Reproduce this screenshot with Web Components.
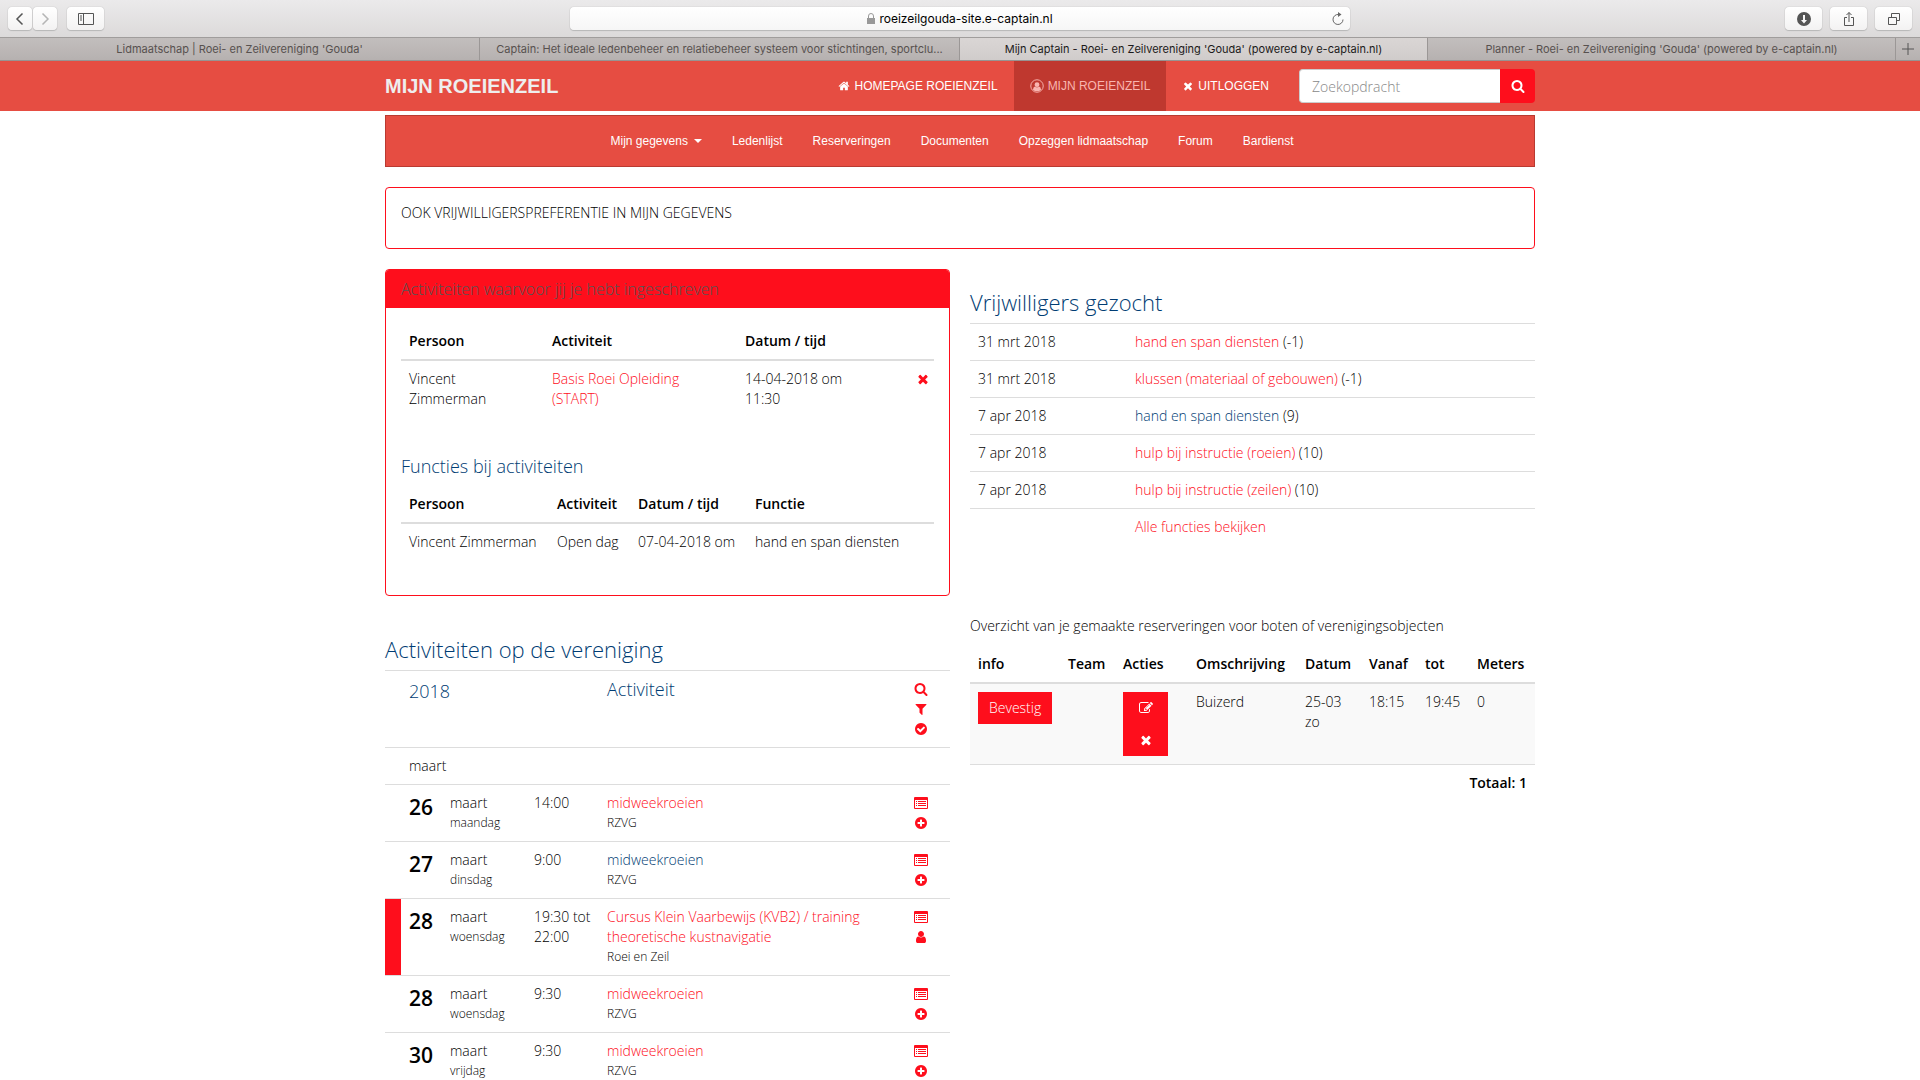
<!DOCTYPE html>
<html lang="nl">
<head>
<meta charset="utf-8">
<title>Mijn Captain - Roei- en Zeilvereniging 'Gouda'</title>
<style>
html { overflow: hidden; }
body {
  margin: 0;
  background: #fff;
  color: #000;
  font: 320 14px/20px "Open Sans", "Noto Sans", sans-serif;
  --red: #fe0e1c;
  --bar: #e64d42;
  --bar-dark: #bf382f;
  --blue: #003c73;
  --line: #ddd;
}
main {
  box-sizing: border-box;
  max-width: 1150px;
  margin: 0 auto;
}
.columns {
  display: grid;
  grid-template-columns: 1fr 1fr;
  gap: 20px;
  margin-top: 20px;
}
</style>
</head>
<body>

<browser-toolbar address="roeizeilgouda-site.e-captain.nl"></browser-toolbar>
<browser-tabs>
  <browser-tab>Lidmaatschap | Roei- en Zeilvereniging 'Gouda'</browser-tab>
  <browser-tab>Captain: Het ideale ledenbeheer en relatiebeheer systeem voor stichtingen, sportclu...</browser-tab>
  <browser-tab active>Mijn Captain - Roei- en Zeilvereniging 'Gouda' (powered by e-captain.nl)</browser-tab>
  <browser-tab>Planner - Roei- en Zeilvereniging 'Gouda' (powered by e-captain.nl)</browser-tab>
</browser-tabs>
<site-header>
  <span slot="brand">MIJN ROEIENZEIL</span>
  <header-link icon="home">HOMEPAGE ROEIENZEIL</header-link>
  <header-link icon="circle-user" active>MIJN ROEIENZEIL</header-link>
  <header-link icon="times">UITLOGGEN</header-link>
</site-header>

<main>
  <site-menu>
    <menu-link caret>Mijn gegevens</menu-link>
    <menu-link>Ledenlijst</menu-link>
    <menu-link>Reserveringen</menu-link>
    <menu-link>Documenten</menu-link>
    <menu-link>Opzeggen lidmaatschap</menu-link>
    <menu-link>Forum</menu-link>
    <menu-link>Bardienst</menu-link>
  </site-menu>
  <notice-box>OOK VRIJWILLIGERSPREFERENTIE IN MIJN GEGEVENS</notice-box>
  <div class="columns">
    <div>
      <red-panel>
        <span slot="title">Activiteiten waarvoor jij je hebt ingeschreven</span>
        <my-activities></my-activities>
        <my-functions></my-functions>
      </red-panel>
      <club-agenda></club-agenda>
    </div>
    <div>
      <volunteer-list></volunteer-list>
      <reservation-list></reservation-list>
    </div>
  </div>
</main>

<script>
// all glyphs sit on a 1792 grid unless they bring their own viewBox
const ICONS = {
  home: '<path d="M1472 992v480q0 26-19 45t-45 19h-384v-384h-256v384h-384q-26 0-45-19t-19-45v-480q0-1 .5-3t.5-3l575-474 575 474q1 2 1 6zm223-69l-62 74q-8 9-21 11h-3q-13 0-21-7l-692-577-692 577q-12 8-24 7-13-2-21-11l-62-74q-8-10-7-23.5t11-21.5l719-599q32-26 76-26t76 26l244 204v-195q0-14 9-23t23-9h192q14 0 23 9t9 23v408l219 182q10 8 11 21.5t-7 23.5z"/>',
  'circle-user': '<circle cx="896" cy="896" r="800" fill="none" stroke="currentColor" stroke-width="120"/><circle cx="896" cy="720" r="310"/><path d="M380 1370q20-360 260-420 110 120 256 120t256-120q240 60 260 420-200 200-516 200t-516-200z"/>',
  times: '<path d="M1490 1322q0 40-28 68l-136 136q-28 28-68 28t-68-28l-294-294-294 294q-28 28-68 28t-68-28l-136-136q-28-28-28-68t28-68l294-294-294-294q-28-28-28-68t28-68l136-136q28-28 68-28t68 28l294 294 294-294q28-28 68-28t68 28l136 136q28 28 28 68t-28 68l-294 294 294 294q28 28 28 68z"/>',
  search: '<path d="M1216 832q0-185-131.5-316.5t-316.5-131.5-316.5 131.5-131.5 316.5 131.5 316.5 316.5 131.5 316.5-131.5 131.5-316.5zm512 832q0 52-38 90t-90 38q-54 0-90-38l-343-342q-179 124-399 124-143 0-273.5-55.5t-225-150-150-225-55.5-273.5 55.5-273.5 150-225 225-150 273.5-55.5 273.5 55.5 225 150 150 225 55.5 273.5q0 220-124 399l343 343q37 37 37 90z"/>',
  filter: '<path d="M1595 295q17 41-14 70l-493 493v742q0 42-39 59-13 5-25 5-27 0-45-19l-256-256q-19-19-19-45v-486l-493-493q-31-29-14-70 17-39 59-39h1280q42 0 59 39z"/>',
  check: '<path d="M1412 734q0-28-18-46l-91-90q-19-19-45-19t-45 19l-408 407-226-226q-19-19-45-19t-45 19l-91 90q-18 18-18 46 0 27 18 45l362 362q19 19 45 19 27 0 46-19l543-543q18-18 18-45zm252 162q0 209-103 385.5t-279.5 279.5-385.5 103-385.5-103-279.5-279.5-103-385.5 103-385.5 279.5-279.5 385.5-103 385.5 103 279.5 279.5 103 385.5z"/>',
  plus: '<path d="M1344 960v-128q0-26-19-45t-45-19h-256v-256q0-26-19-45t-45-19h-128q-26 0-45 19t-19 45v256h-256q-26 0-45 19t-19 45v128q0 26 19 45t45 19h256v256q0 26 19 45t45 19h128q26 0 45-19t19-45v-256h256q26 0 45-19t19-45zm320-64q0 209-103 385.5t-279.5 279.5-385.5 103-385.5-103-279.5-279.5-103-385.5 103-385.5 279.5-279.5 385.5-103 385.5 103 279.5 279.5 103 385.5z"/>',
  user: '<path d="M1536 1399q0 109-62.5 187t-150.5 78h-854q-88 0-150.5-78t-62.5-187q0-85 8.5-160.5t31.5-152 58.5-131 94-89 134.5-34.5q131 128 313 128t313-128q76 0 134.5 34.5t94 89 58.5 131 31.5 152 8.5 160.5zm-256-887q0 159-112.5 271.5t-271.5 112.5-271.5-112.5-112.5-271.5 112.5-271.5 271.5-112.5 271.5 112.5 112.5 271.5z"/>',
  edit: '<path d="M888 1184l116-116-152-152-116 116v56h96v96h56zm440-720q-16-16-33 1l-350 350q-17 17-1 33t33-1l350-350q17-17 1-33zm80 594v190q0 119-84.5 203.5t-203.5 84.5h-832q-119 0-203.5-84.5t-84.5-203.5v-832q0-119 84.5-203.5t203.5-84.5h832q63 0 117 25 15 7 18 23 3 17-9 29l-49 49q-14 14-32 8-23-6-45-6h-832q-66 0-113 47t-47 113v832q0 66 47 113t113 47h832q66 0 113-47t47-113v-126q0-13 9-22l64-64q15-15 35-7t20 29zm-96-738l288 288-672 672h-288v-288zm444 132l-92 92-288-288 92-92q28-28 68-28t68 28l152 152q28 28 28 68t-28 68z"/>',
  list: ['0 0 14 14', '<path fill-rule="evenodd" d="M1 1h12a1 1 0 0 1 1 1v10a1 1 0 0 1-1 1H1a1 1 0 0 1-1-1V2a1 1 0 0 1 1-1zM1 4v8h12V4z"/><path d="M2 5h1v1H2zM4 5h8v1H4zM2 7h1v1H2zM4 7h8v1H4zM2 9h1v1H2zM4 9h8v1H4z"/>'],
  back: ['0 0 16 16', '<path d="M10.500 2.500L5 8l5.500 5.500" fill="none" stroke="currentColor" stroke-width="1.500"/>'],
  forward: ['0 0 16 16', '<path d="M5.500 2.500L11 8l-5.500 5.500" fill="none" stroke="currentColor" stroke-width="1.500"/>'],
  sidebar: ['0 0 16 16', '<path d="M.5 2.500h15v11H.5zM5.500 2.500v11M2 5h2M2 7h2M2 9h2" fill="none" stroke="currentColor"/>'],
  lock: ['0 0 8 12', '<path d="M0 5h8v6H0z"/><path d="M1.500 5V3a2.500 2.500 0 0 1 5 0v2" fill="none" stroke="currentColor"/>'],
  reload: ['0 0 14 14', '<path d="M7.500 2.500a5 5 0 1 0 4.500 5" fill="none" stroke="currentColor"/><path d="M7 0l3.500 2.500L7 5z"/>'],
  download: ['0 0 16 16', '<path fill-rule="evenodd" d="M8 1a7 7 0 1 1 0 14A7 7 0 0 1 8 1zM7 4v5H5l3 3.500L11 9H9V4z"/>'],
  share: ['0 0 16 16', '<path d="M6 6.500H3.500v8h9v-8H10M8 11V1.500M5.500 4L8 1.500 10.500 4" fill="none" stroke="currentColor"/>'],
  windows: ['0 0 16 16', '<path d="M2.500 6.500h8v7h-8zM5.500 6.500v-4h8v7h-3" fill="none" stroke="currentColor"/>'],
}

function shadow(el, html) {
  el.attachShadow({mode: 'open'}).innerHTML = html
}

const TABLE = `
:host { display: block; }
table { width: 100%; border-collapse: separate; border-spacing: 0; table-layout: fixed; }
th, td { box-sizing: border-box; padding: 8px; text-align: left; vertical-align: top; }
th { font-weight: 600; border-bottom: 2px solid var(--line); }
a { color: var(--red); text-decoration: none; }
a.blue { color: var(--blue); }
h2, h4 { margin: 0; color: var(--blue); font-weight: inherit; }
h2 { font-size: 22px; line-height: 26px; }
h4 { font-size: 18px; line-height: 20px; }`

// one <col> per width, 0 takes what is left
const cols = list => '<colgroup>' + list.map(w => `<col${w ? ` style="width:${w}px"` : ''}>`).join('') + '</colgroup>'

customElements.define('ui-icon', class extends HTMLElement {
  constructor() {
    super()
    let icon = ICONS[this.getAttribute('name')]
    let [box, body] = Array.isArray(icon) ? icon : ['0 0 1792 1792', icon]
    shadow(this, `
<style>
:host { display: inline-block; width: 14px; height: 14px; flex: none; }
svg { display: block; width: 100%; height: 100%; fill: currentColor; }
</style>
<svg viewBox="${box}" aria-hidden="true">${body}</svg>`)
  }
})

customElements.define('browser-toolbar', class extends HTMLElement {
  constructor() {
    super()
    shadow(this, `
<style>
:host {
  display: flex; align-items: center; justify-content: space-between;
  box-sizing: border-box; height: 37px; padding: 0 8px;
  background: linear-gradient(#ebeaeb, #dcdada);
  color: #555;
}
.group { display: flex; gap: 8px; flex: 1; }
.group.end { justify-content: flex-end; }
.pair { display: flex; gap: 1px; margin-right: 2px; }
button {
  display: flex; align-items: center; justify-content: center;
  width: 37px; height: 23px; padding: 0; border: 0; border-radius: 4px;
  background: linear-gradient(#fff, #f3f2f2);
  box-shadow: 0 0 1px #999, 0 1px 1px #bbb;
  color: inherit;
}
.pair button { width: 24px; }
.pair button + button { color: #b5b5b5; }
ui-icon { width: 16px; height: 16px; }
.address {
  display: grid; grid-template-columns: 1fr auto 1fr; align-items: center; flex: none;
  box-sizing: border-box; width: 41%; height: 23px; padding: 0 5px;
  border-radius: 4px; background: linear-gradient(#fff, #f6f6f6);
  box-shadow: 0 0 1px #999, 0 1px 1px #bbb;
}
.address label { display: flex; align-items: center; grid-column: 2; gap: 4px; }
.address ui-icon { width: 8px; height: 12px; color: #999; }
input {
  field-sizing: content; border: 0; padding: 0; outline: 0; background: none;
  font: 12px Inter, Roboto, sans-serif; color: #000;
}
.address button { justify-self: end; width: 14px; background: none; box-shadow: none; }
.address button ui-icon { width: 14px; height: 14px; color: #666; }
</style>
<div class="group">
  <div class="pair">
    <button aria-label="Vorige"><ui-icon name="back"></ui-icon></button>
    <button aria-label="Volgende"><ui-icon name="forward"></ui-icon></button>
  </div>
  <button aria-label="Navigatiekolom"><ui-icon name="sidebar"></ui-icon></button>
</div>
<div class="address">
  <label><ui-icon name="lock"></ui-icon><input type="text" aria-label="Adres" value="${this.getAttribute('address')}"></label>
  <button aria-label="Herladen"><ui-icon name="reload"></ui-icon></button>
</div>
<div class="group end">
  <button aria-label="Downloads"><ui-icon name="download"></ui-icon></button>
  <button aria-label="Delen"><ui-icon name="share"></ui-icon></button>
  <button aria-label="Vensters"><ui-icon name="windows"></ui-icon></button>
</div>`)
  }
})

customElements.define('browser-tabs', class extends HTMLElement {
  constructor() {
    super()
    shadow(this, `
<style>
:host {
  display: grid; grid-template-columns: 480fr 480fr 468fr 468fr 24px;
  box-sizing: border-box; height: 24px;
  border-top: 1px solid #a09d9c; border-bottom: 1px solid #979392;
  background: linear-gradient(#c2bebd, #b6b1b0);
}
button { display: flex; align-items: center; justify-content: center; border: 0; padding: 0; background: none; color: #555; }
svg { width: 12px; height: 12px; }
</style>
<slot></slot>
<button aria-label="Nieuw tabblad"><svg viewBox="0 0 12 12"><path d="M6 0v12M0 6h12" stroke="currentColor"/></svg></button>`)
  }
})

customElements.define('browser-tab', class extends HTMLElement {
  constructor() {
    super()
    shadow(this, `
<style>
:host { display: block; min-width: 0; border-right: 1px solid #9b9796; }
:host([active]) { background: linear-gradient(#dad6d5, #d0cccb); }
button {
  width: 100%; height: 100%; padding: 0 16px; border: 0; background: none;
  font: 11px Inter, Roboto, sans-serif; color: #57514f;
  overflow: hidden; white-space: nowrap; text-overflow: ellipsis;
}
:host([active]) button { color: #1c1a1a; }
</style>
<button><slot></slot></button>`)
  }
})

customElements.define('site-header', class extends HTMLElement {
  constructor() {
    super()
    shadow(this, `
<style>
:host { display: block; background: var(--bar); }
.inner {
  display: flex; align-items: center; height: 50px; max-width: 1150px; margin: 0 auto;
  font: 12px/20px "Liberation Sans", Arial, sans-serif; color: #fff;
}
.brand { margin-right: auto; color: #eee; text-decoration: none; font-size: 20px; font-weight: 700; }
nav { display: flex; align-self: stretch; margin-right: 14px; }
form { display: flex; height: 34px; }
input {
  box-sizing: border-box; width: 201px; padding: 0 12px; border: 1px solid #ccc; border-right: 0;
  border-radius: 4px 0 0 4px; background: #fff; color: #000; font: 320 14px "Open Sans", sans-serif;
}
input::placeholder { color: #888; opacity: 1; }
button {
  display: flex; align-items: center; justify-content: center; width: 35px; padding: 0;
  border: 0; border-radius: 0 4px 4px 0; background: var(--red); color: #fff;
}
</style>
<div class="inner">
  <a class="brand" href="#"><slot name="brand"></slot></a>
  <nav><slot></slot></nav>
  <form>
    <input type="text" placeholder="Zoekopdracht" aria-label="Zoekopdracht">
    <button type="button" aria-label="Zoeken"><ui-icon name="search"></ui-icon></button>
  </form>
</div>`)
  }
})

customElements.define('header-link', class extends HTMLElement {
  constructor() {
    super()
    shadow(this, `
<style>
:host { display: flex; }
a { display: flex; align-items: center; gap: 4px; padding: 0 16px; color: #fff; text-decoration: none; }
ui-icon { width: 12px; height: 12px; }
ui-icon[name=circle-user] { width: 14px; height: 14px; }
:host([active]) a { background: var(--bar-dark); color: #f9b5b0; }
</style>
<a href="#"><ui-icon name="${this.getAttribute('icon')}"></ui-icon><slot></slot></a>`)
  }
})

customElements.define('site-menu', class extends HTMLElement {
  constructor() {
    super()
    shadow(this, `
<style>
:host {
  display: block; margin-top: 4px; border: 1px solid #b93a31; background: var(--bar);
  font: 12px/20px "Liberation Sans", Arial, sans-serif;
}
nav { display: flex; justify-content: center; padding-right: 16px; }
</style>
<nav><slot></slot></nav>`)
  }
})

customElements.define('menu-link', class extends HTMLElement {
  constructor() {
    super()
    shadow(this, `
<style>
a { display: flex; align-items: center; gap: 6px; padding: 15px; color: #fff; text-decoration: none; }
i { display: none; border: 4px solid transparent; border-top-color: #fff; border-bottom: 0; }
:host([caret]) i { display: block; }
</style>
<a href="#"><slot></slot><i></i></a>`)
  }
})

customElements.define('notice-box', class extends HTMLElement {
  constructor() {
    super()
    shadow(this, `
<style>
:host { display: block; margin-top: 20px; padding: 15px 15px 25px; border: 1px solid var(--red); border-radius: 4px; }
</style>
<slot></slot>`)
  }
})

customElements.define('red-panel', class extends HTMLElement {
  constructor() {
    super()
    shadow(this, `
<style>
:host { display: block; border: 1px solid var(--red); border-radius: 4px; overflow: hidden; }
h3 { margin: 0; padding: 9px 15px; background: var(--red); color: #555; font-size: 16px; line-height: 20px; font-weight: inherit; }
.body { display: flex; flex-direction: column; gap: 39px; padding: 15px 15px 35px; }
</style>
<h3><slot name="title"></slot></h3>
<div class="body"><slot></slot></div>`)
  }
})

customElements.define('my-activities', class extends HTMLElement {
  constructor() {
    super()
    shadow(this, `
<style>${TABLE}
.del { padding: 8px 0 8px 6px; }
ui-icon { vertical-align: -2px; }
</style>
<table>
  ${cols([143, 193, 0, 24])}
  <tr><th>Persoon</th><th>Activiteit</th><th>Datum / tijd</th><th></th></tr>
  <tr>
    <td>Vincent<br>Zimmerman</td>
    <td><a href="#">Basis Roei Opleiding<br>(START)</a></td>
    <td>14-04-2018 om<br>11:30</td>
    <td class="del"><a href="#" aria-label="Afmelden"><ui-icon name="times"></ui-icon></a></td>
  </tr>
</table>`)
  }
})

customElements.define('my-functions', class extends HTMLElement {
  constructor() {
    super()
    shadow(this, `
<style>${TABLE}
h4 { margin-bottom: 10px; }
</style>
<h4>Functies bij activiteiten</h4>
<table>
  ${cols([148, 81, 117, 0])}
  <tr><th>Persoon</th><th>Activiteit</th><th>Datum / tijd</th><th>Functie</th></tr>
  <tr><td>Vincent Zimmerman</td><td>Open dag</td><td>07-04-2018 om</td><td>hand en span diensten</td></tr>
</table>`)
  }
})

customElements.define('club-agenda', class extends HTMLElement {
  constructor() {
    super()
    let items = [
      {day: 26, name: 'maandag', time: '14:00', title: 'midweekroeien', by: 'RZVG'},
      {day: 27, name: 'dinsdag', time: '9:00', title: 'midweekroeien', by: 'RZVG', seen: true},
      {day: 28, name: 'woensdag', time: '19:30 tot 22:00', title: 'Cursus Klein Vaarbewijs (KVB2) / training theoretische kustnavigatie', by: 'Roei en Zeil', mine: true},
      {day: 28, name: 'woensdag', time: '9:30', title: 'midweekroeien', by: 'RZVG'},
      {day: 30, name: 'vrijdag', time: '9:30', title: 'midweekroeien', by: 'RZVG'},
    ]
    shadow(this, `
<style>${TABLE}
:host { margin-top: 40px; }
h2 { margin-bottom: 8px; }
td { border-top: 1px solid var(--line); }
td:first-child { padding: 0; }
.mine td:first-child { background: var(--red); }
.day { font-size: 21px; font-weight: 600; line-height: 28px; padding-right: 0; }
.time { padding-right: 0; }
.act { padding-right: 0; }
.act a { display: block; height: 20px; }
.act ui-icon { display: block; padding: 3px 0; }
h4.year { line-height: 24px; }
small { display: block; font-size: 12px; }
</style>
<h2>Activiteiten op de vereniging</h2>
<table>
  ${cols([16, 41, 84, 73, 0, 44])}
  <tr>
    <td></td>
    <td colspan="3"><h4 class="year">2018</h4></td>
    <td><h4>Activiteit</h4></td>
    <td class="act">
      <a href="#" aria-label="Zoeken"><ui-icon name="search"></ui-icon></a>
      <a href="#" aria-label="Filter"><ui-icon name="filter"></ui-icon></a>
      <a href="#" aria-label="Aangemeld"><ui-icon name="check"></ui-icon></a>
    </td>
  </tr>
  <tr><td></td><td colspan="5">maart</td></tr>
  ${items.map(i => `
  <tr class="${i.mine ? 'mine' : ''}">
    <td></td>
    <td class="day">${i.day}</td>
    <td>maart<small>${i.name}</small></td>
    <td class="time">${i.time}</td>
    <td><a href="#" class="${i.seen ? 'blue' : ''}">${i.title}</a><small>${i.by}</small></td>
    <td class="act">
      <a href="#" aria-label="Details"><ui-icon name="list"></ui-icon></a>
      <a href="#" aria-label="Deelname"><ui-icon name="${i.mine ? 'user' : 'plus'}"></ui-icon></a>
    </td>
  </tr>`).join('')}
</table>`)
  }
})

customElements.define('volunteer-list', class extends HTMLElement {
  constructor() {
    super()
    let rows = [
      ['31 mrt 2018', 'hand en span diensten', -1],
      ['31 mrt 2018', 'klussen (materiaal of gebouwen)', -1],
      ['7 apr 2018', 'hand en span diensten', 9, 'blue'],
      ['7 apr 2018', 'hulp bij instructie (roeien)', 10],
      ['7 apr 2018', 'hulp bij instructie (zeilen)', 10],
    ]
    shadow(this, `
<style>${TABLE}
:host { padding-top: 20px; }
h2 { margin-bottom: 8px; }
td { border-top: 1px solid var(--line); }
</style>
<h2>Vrijwilligers gezocht</h2>
<table>
  ${cols([157, 0])}
  ${rows.map(([date, name, n, cls]) => `<tr><td>${date}</td><td><a href="#" class="${cls || ''}">${name}</a> (${n})</td></tr>`).join('')}
  <tr><td></td><td><a href="#">Alle functies bekijken</a></td></tr>
</table>`)
  }
})

customElements.define('reservation-list', class extends HTMLElement {
  constructor() {
    super()
    shadow(this, `
<style>${TABLE}
:host { margin-top: 71px; }
p { margin: 0 0 10px; }
th { padding-right: 0; }
.row td { background: #f9f9f9; border-bottom: 1px solid var(--line); }
.total { text-align: right; font-weight: 600; }
button {
  display: flex; align-items: center; justify-content: center; height: 32px; padding: 0 11px;
  border: 0; background: var(--red); color: #fff; font: inherit;
}
.icon { width: 45px; }
</style>
<p>Overzicht van je gemaakte reserveringen voor boten of verenigingsobjecten</p>
<table>
  ${cols([90, 55, 73, 0, 64, 56, 52, 66])}
  <tr><th>info</th><th>Team</th><th>Acties</th><th>Omschrijving</th><th>Datum</th><th>Vanaf</th><th>tot</th><th>Meters</th></tr>
  <tr class="row">
    <td><button>Bevestig</button></td>
    <td></td>
    <td>
      <button class="icon" aria-label="Wijzigen"><ui-icon name="edit"></ui-icon></button>
      <button class="icon" aria-label="Verwijderen"><ui-icon name="times"></ui-icon></button>
    </td>
    <td>Buizerd</td><td>25-03<br>zo</td><td>18:15</td><td>19:45</td><td>0</td>
  </tr>
  <tr><td class="total" colspan="8">Totaal: 1</td></tr>
</table>`)
  }
})
</script>
</body>
</html>
